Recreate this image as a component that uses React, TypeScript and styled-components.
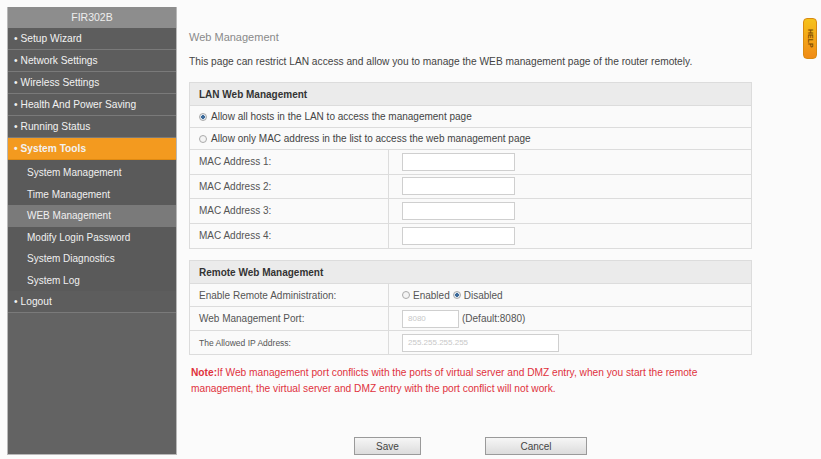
import React from "react";
import styled, { createGlobalStyle } from "styled-components";

const Global = createGlobalStyle`
  html, body { margin: 0; padding: 0; background: #fbfbfb; }
  body { font-family: "Liberation Sans", Arial, sans-serif; font-size: 10px; color: #444; }
  * { box-sizing: border-box; }
`;

const Page = styled.div`
  display: flex;
  width: 821px;
  height: 459px;
  padding: 7px 0 4px 7px;
  position: relative;
`;

const Sidebar = styled.nav`
  width: 170px;
  display: flex;
  flex-direction: column;
  background: #646464;
  border: 1px solid #b8b8b8;
  border-top: none;
`;

const Brand = styled.div`
  height: 21px;
  background: #8d8d8d;
  color: #eee;
  font-size: 10.5px;
  text-align: center;
  line-height: 21px;
`;

const MenuItem = styled.div<{ $active?: boolean }>`
  height: 22px;
  line-height: 21px;
  padding-left: 6px;
  color: #f2f2f2;
  font-size: 10.2px;
  background: ${(p) => (p.$active ? "#f39a1f" : "#5d5d5d")};
  border-bottom: 1px solid ${(p) => (p.$active ? "#e08a12" : "#7a7a7a")};
  font-weight: ${(p) => (p.$active ? "bold" : "normal")};
  &::before { content: "•"; margin-right: 3px; }
`;

const SubList = styled.div`
  padding-top: 2px;
  background: #5a5a5a;
`;

const SubItem = styled.div<{ $current?: boolean }>`
  height: 21.5px;
  line-height: 21.5px;
  padding-left: 19px;
  color: #f0f0f0;
  font-size: 10px;
  background: ${(p) => (p.$current ? "#7a7a7a" : "transparent")};
`;

const Fill = styled.div`
  flex: 1;
  background: #636363;
`;

const Main = styled.main`
  flex: 1;
  padding: 24px 0 0 12px;
  display: flex;
  flex-direction: column;
`;

const Title = styled.div`
  font-size: 11px;
  color: #8a8a8a;
  height: 14px;
`;

const Desc = styled.div`
  margin-top: 12px;
  font-size: 10.2px;
  color: #444;
`;

const Table = styled.div<{ $top: number }>`
  margin-top: ${(p) => p.$top}px;
  width: 563px;
  border: 1px solid #dcdcdc;
  background: #fafafa;
`;

const Head = styled.div`
  height: 23px;
  line-height: 23px;
  padding-left: 9px;
  background: #ebebeb;
  font-weight: bold;
  font-size: 10px;
  color: #333;
  border-bottom: 1px solid #dcdcdc;
`;

const Row = styled.div<{ $h?: number }>`
  display: grid;
  grid-template-columns: 199px 1fr;
  height: ${(p) => p.$h ?? 24.5}px;
  border-bottom: 1px solid #dcdcdc;
  &:last-child { border-bottom: none; }
`;

const Label = styled.div<{ $small?: boolean }>`
  display: flex;
  align-items: center;
  padding-left: 9px;
  border-right: 1px solid #dcdcdc;
  font-size: ${(p) => (p.$small ? "8.5px" : "10px")};
  color: #555;
`;

const Value = styled.div`
  display: flex;
  align-items: center;
  padding-left: 13px;
  gap: 3px;
  font-size: 10px;
  color: #555;
`;

const FullRow = styled.div`
  display: flex;
  align-items: center;
  gap: 4px;
  height: 22px;
  padding-left: 9px;
  border-bottom: 1px solid #dcdcdc;
  font-size: 10px;
  color: #444;
`;

const Radio = styled.span<{ $on?: boolean }>`
  width: 8px;
  height: 8px;
  border-radius: 50%;
  border: 1px solid #aaa;
  background: ${(p) => (p.$on ? "radial-gradient(circle, #3c6a9a 0 40%, #dfe6ee 45%)" : "#f4f4f4")};
  flex: none;
`;

const Field = styled.div<{ $w: number }>`
  width: ${(p) => p.$w}px;
  height: 18px;
  background: #fff;
  border: 1px solid #cfcfcf;
  font-size: 8px;
  color: #c8c8c8;
  line-height: 16px;
  padding-left: 5px;
`;

const Note = styled.div`
  margin-top: 10px;
  width: 535px;
  color: #e0323d;
  font-size: 10.2px;
  line-height: 16px;
  padding-left: 2px;
  b { font-weight: bold; }
`;

const Buttons = styled.div`
  margin-top: 40px;
  display: flex;
  gap: 64px;
  padding-left: 165px;
`;

const Button = styled.button`
  width: 67px;
  height: 18px;
  background: linear-gradient(#f6f6f6, #dcdcdc);
  border: 1px solid #9a9a9a;
  font-family: "Liberation Sans", Arial, sans-serif;
  font-size: 10px;
  color: #444;
  padding: 0;
  &:last-child { width: 102px; }
`;

const HelpTab = styled.div`
  position: absolute;
  top: 18px;
  right: 4px;
  width: 14px;
  height: 41px;
  border-radius: 4px;
  background: linear-gradient(#f6c21c, #f08a14);
  border: 1px solid #d88a10;
  color: #7a4a00;
  font-size: 7px;
  font-weight: bold;
  writing-mode: vertical-rl;
  display: flex;
  align-items: center;
  justify-content: center;
`;

const menu = ["Setup Wizard", "Network Settings", "Wireless Settings", "Health And Power Saving", "Running Status"];
const sub = ["System Management", "Time Management", "WEB Management", "Modify Login Password", "System Diagnostics", "System Log"];

export default function App() {
  return (
    <Page>
      <Global />
      <Sidebar>
        <Brand>FIR302B</Brand>
        {menu.map((m) => (
          <MenuItem key={m}>{m}</MenuItem>
        ))}
        <MenuItem $active>System Tools</MenuItem>
        <SubList>
          {sub.map((s) => (
            <SubItem key={s} $current={s === "WEB Management"}>{s}</SubItem>
          ))}
        </SubList>
        <MenuItem>Logout</MenuItem>
        <Fill />
      </Sidebar>
      <Main>
        <Title>Web Management</Title>
        <Desc>This page can restrict LAN access and allow you to manage the WEB management page of the router remotely.</Desc>
        <Table $top={15}>
          <Head>LAN Web Management</Head>
          <FullRow>
            <Radio $on />Allow all hosts in the LAN to access the management page
          </FullRow>
          <FullRow>
            <Radio />Allow only MAC address in the list to access the web management page
          </FullRow>
          {[1, 2, 3, 4].map((n) => (
            <Row key={n}>
              <Label>MAC Address {n}:</Label>
              <Value>
                <Field $w={113} />
              </Value>
            </Row>
          ))}
        </Table>
        <Table $top={11}>
          <Head>Remote Web Management</Head>
          <Row $h={23}>
            <Label>Enable Remote Administration:</Label>
            <Value>
              <Radio />Enabled<Radio $on />Disabled
            </Value>
          </Row>
          <Row $h={24}>
            <Label>Web Management Port:</Label>
            <Value>
              <Field $w={57}>8080</Field>(Default:8080)
            </Value>
          </Row>
          <Row $h={23}>
            <Label $small>The Allowed IP Address:</Label>
            <Value>
              <Field $w={157}>255.255.255.255</Field>
            </Value>
          </Row>
        </Table>
        <Note>
          <b>Note:</b>If Web management port conflicts with the ports of virtual server and DMZ entry, when you start the remote management, the virtual server and DMZ entry with the port conflict will not work.
        </Note>
        <Buttons>
          <Button>Save</Button>
          <Button>Cancel</Button>
        </Buttons>
      </Main>
      <HelpTab>HELP</HelpTab>
    </Page>
  );
}
